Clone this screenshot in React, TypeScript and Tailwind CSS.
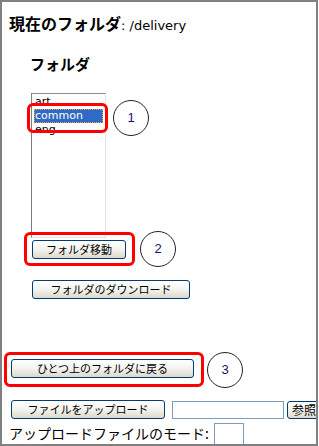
import React from 'react';

const jp = '"MS UI Gothic", "Noto Sans CJK JP", sans-serif';

const XpButton: React.FC<{ label: string; className?: string }> = ({ label, className }) => (
  <button
    type="button"
    className={`flex items-center justify-center rounded-[3px] border border-[#003c74] bg-gradient-to-b from-white via-[#f4f3ee] to-[#dcd9cc] text-[11px] leading-none text-black ${className ?? ''}`}
    style={{ fontFamily: jp }}
  >
    {label}
  </button>
);

const Callout: React.FC<{ n: number; className: string }> = ({ n, className }) => (
  <div
    className={`absolute flex h-[36px] w-[36px] items-center justify-center rounded-full border border-[#222] bg-white text-[13px] text-[#14146e] ${className}`}
    style={{ fontFamily: '"Liberation Sans", sans-serif' }}
  >
    {n}
  </div>
);

const folders = ['art', 'common', 'eng'];

export default function App() {
  return (
    <div className="relative h-[446px] w-[318px] overflow-hidden border-2 border-[#808080] bg-white text-black">
      <div className="flex flex-col">
        {/* current folder */}
        <div className="mt-[11px] flex h-[20px] items-baseline pl-[7px] leading-[20px]">
          <span className="text-[16px] font-bold" style={{ fontFamily: jp }}>現在のフォルダ</span>
          <span className="text-[13px]" style={{ fontFamily: '"DejaVu Sans", sans-serif' }}>: /delivery</span>
        </div>

        <div className="mt-[21px] h-[20px] pl-[28px] text-[15px] font-bold leading-[20px]" style={{ fontFamily: jp }}>
          フォルダ
        </div>

        {/* folder list */}
        <div className="ml-[29px] mt-[19px] h-[145px] w-[75px] border-b border-l border-r border-t border-b-[#e3e1da] border-l-[#7f7f7f] border-r-[#e3e1da] border-t-[#8f8f8f] bg-white pt-[1px]">
          {folders.map((f) => (
            <div
              key={f}
              className={`mx-[2px] h-[14px] pl-[1px] text-[11px] leading-[14px] ${
                f === 'common' ? 'bg-[#316ac5] text-white outline-1 outline-dotted outline-[#e8a33a] -outline-offset-1' : ''
              }`}
              style={{ fontFamily: '"DejaVu Sans", sans-serif' }}
            >
              {f}
            </div>
          ))}
        </div>

        <XpButton label="フォルダ移動" className="ml-[30px] mt-[2px] h-[19px] w-[94px]" />
        <XpButton label="フォルダのダウンロード" className="ml-[30px] mt-[21px] h-[19px] w-[158px]" />
        <XpButton label="ひとつ上のフォルダに戻る" className="ml-[9px] mt-[60px] h-[19px] w-[183px]" />

        {/* upload */}
        <div className="ml-[9px] mt-[22px] flex items-center">
          <XpButton label="ファイルをアップロード" className="h-[19px] w-[154px] shrink-0" />
          <input className="ml-[7px] h-[18px] w-[112px] shrink-0 border border-[#7f9db9] bg-white" />
          <XpButton label="参照..." className="ml-[3px] h-[18px] w-[44px] shrink-0 text-[12px]" />
        </div>

        <div className="mt-[4px] flex items-start pl-[7px]">
          <span className="mt-[1px] text-[14px] leading-[18px]" style={{ fontFamily: jp }}>
            アップロードファイルのモード:
          </span>
          <input className="ml-[5px] h-[25px] w-[30px] border border-[#7f9db9] bg-white" />
        </div>
      </div>

      {/* annotation overlays */}
      <div className="absolute left-[25px] top-[101px] h-[30px] w-[81px] rounded-[6px] border-[3px] border-[#ff0000]" />
      <Callout n={1} className="left-[111px] top-[98px]" />
      <div className="absolute left-[22px] top-[230px] h-[34px] w-[111px] rounded-[6px] border-[3px] border-[#ff0000]" />
      <Callout n={2} className="left-[138px] top-[229px]" />
      <div className="absolute left-[2px] top-[350px] h-[35px] w-[200px] rounded-[6px] border-[3px] border-[#ff0000]" />
      <Callout n={3} className="left-[205px] top-[350px]" />
    </div>
  );
}
